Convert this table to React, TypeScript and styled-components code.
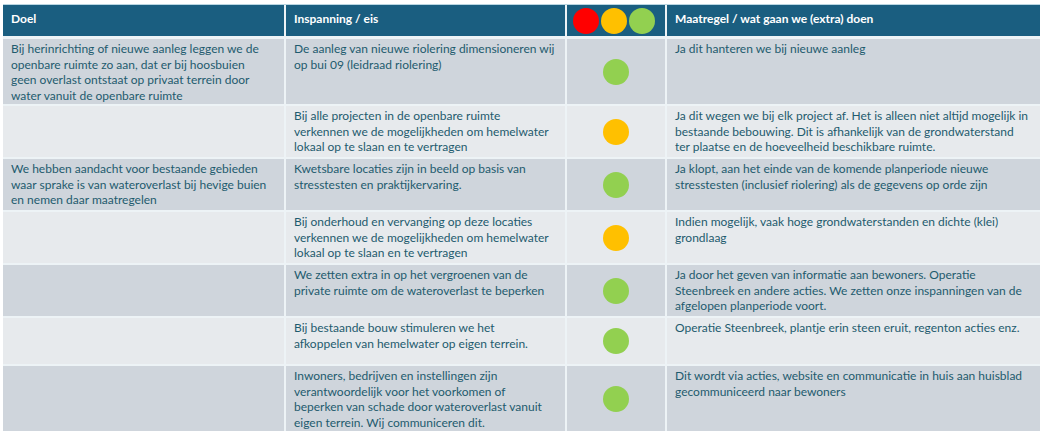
import React from "react";
import styled, { createGlobalStyle } from "styled-components";

type Light = "green" | "orange" | "red";

type Row = {
  doel: string;
  inspanning: string;
  light: Light;
  maatregel: string;
  height: number;
};

const lightColors: Record<Light, string> = {
  red: "#ff0000",
  orange: "#ffc000",
  green: "#92d050",
};

const rows: Row[] = [
  {
    doel: "Bij herinrichting of nieuwe aanleg leggen we de\nopenbare ruimte zo aan, dat er bij hoosbuien\ngeen overlast ontstaat op privaat terrein door\nwater vanuit de openbare ruimte",
    inspanning: "De aanleg van nieuwe riolering dimensioneren wij\nop bui 09 (leidraad riolering)",
    light: "green",
    maatregel: "Ja dit hanteren we bij nieuwe aanleg",
    height: 65,
  },
  {
    doel: "",
    inspanning: "Bij alle projecten in de openbare ruimte\nverkennen we de mogelijkheden om hemelwater\nlokaal op te slaan en te vertragen",
    light: "orange",
    maatregel: "Ja dit wegen we bij elk project af. Het is alleen niet altijd mogelijk in\nbestaande bebouwing. Dit is afhankelijk van de grondwaterstand\nter plaatse en de hoeveelheid beschikbare ruimte.",
    height: 51,
  },
  {
    doel: "We hebben aandacht voor bestaande gebieden\nwaar sprake is van wateroverlast bij hevige buien\nen nemen daar maatregelen",
    inspanning: "Kwetsbare locaties zijn in beeld op basis van\nstresstesten en praktijkervaring.",
    light: "green",
    maatregel: "Ja klopt, aan het einde van de komende planperiode nieuwe\nstresstesten (inclusief riolering) als de gegevens op orde zijn",
    height: 51,
  },
  {
    doel: "",
    inspanning: "Bij onderhoud en vervanging op deze locaties\nverkennen we de mogelijkheden om hemelwater\nlokaal op te slaan en te vertragen",
    light: "orange",
    maatregel: "Indien mogelijk, vaak hoge grondwaterstanden en dichte (klei)\ngrondlaag",
    height: 51,
  },
  {
    doel: "",
    inspanning: "We zetten extra in op het vergroenen van de\nprivate ruimte om de wateroverlast te beperken",
    light: "green",
    maatregel: "Ja door het geven van informatie aan bewoners. Operatie\nSteenbreek en andere acties. We zetten onze inspanningen van de\nafgelopen planperiode voort.",
    height: 51,
  },
  {
    doel: "",
    inspanning: "Bij bestaande bouw stimuleren we het\nafkoppelen van hemelwater op eigen terrein.",
    light: "green",
    maatregel: "Operatie Steenbreek, plantje erin steen eruit, regenton acties enz.",
    height: 46,
  },
  {
    doel: "",
    inspanning: "Inwoners, bedrijven en instellingen zijn\nverantwoordelijk voor het voorkomen of\nbeperken van schade door wateroverlast vanuit\neigen terrein. Wij communiceren dit.",
    light: "green",
    maatregel: "Dit wordt via acties, website en communicatie in huis aan huisblad\ngecommuniceerd naar bewoners",
    height: 65,
  },
];

const GlobalStyle = createGlobalStyle`
  html, body {
    margin: 0;
    padding: 0;
    background: #ffffff;
  }
  body {
    font-family: Lato, "Open Sans", sans-serif;
  }
`;

const App: React.FC = () => {
  return (
    <>
      <GlobalStyle />
      <Page>
        <Table>
          <HeaderRow>
            <HeaderCell>Doel</HeaderCell>
            <HeaderCell>Inspanning / eis</HeaderCell>
            <HeaderLights>
              <Dot color={lightColors.red} />
              <Dot color={lightColors.orange} />
              <Dot color={lightColors.green} />
            </HeaderLights>
            <HeaderCell>Maatregel / wat gaan we (extra) doen</HeaderCell>
          </HeaderRow>
          {rows.map((row, i) => (
            <BodyRow key={i} h={row.height} shade={i % 2 === 0 ? "dark" : "light"}>
              <Cell>{row.doel}</Cell>
              <Cell>{row.inspanning}</Cell>
              <LightCell>
                <Dot color={lightColors[row.light]} />
              </LightCell>
              <Cell>{row.maatregel}</Cell>
            </BodyRow>
          ))}
        </Table>
      </Page>
    </>
  );
};

const Page = styled.div`
  width: 1044px;
  height: 436px;
  padding: 4px 0 0 3px;
  box-sizing: border-box;
`;

const Table = styled.div`
  width: 1037px;
  display: flex;
  flex-direction: column;
  gap: 2px;
  background: #edf3f6;
  border-top: 1px solid #b9d6e2;
`;

const columns = `281px 279px 98px 1fr`;

const HeaderRow = styled.div`
  display: grid;
  grid-template-columns: ${columns};
  column-gap: 2px;
  height: 31px;
  margin-bottom: 1px;
`;

const HeaderCell = styled.div`
  background: #1a5e80;
  color: #ffffff;
  font-weight: 700;
  font-size: 12px;
  padding: 6px 8px 0;
`;

const HeaderLights = styled.div`
  background: #1a5e80;
  display: flex;
  justify-content: center;
  align-items: center;
  gap: 2px;
  padding-right: 5px;
`;

const BodyRow = styled.div<{ h: number; shade: "dark" | "light" }>`
  display: grid;
  grid-template-columns: ${columns};
  column-gap: 2px;
  height: ${(p) => p.h}px;
  & > div {
    background: ${(p) => (p.shade === "dark" ? "#cfd5dc" : "#e7eaed")};
  }
`;

const Cell = styled.div`
  color: #1e5b6e;
  font-size: 12px;
  line-height: 15.5px;
  padding: 2px 8px 0;
  white-space: pre-line;
  overflow: hidden;
`;

const LightCell = styled.div`
  display: flex;
  justify-content: center;
  align-items: center;
`;

const Dot = styled.span<{ color: string }>`
  display: block;
  width: 26px;
  height: 26px;
  border-radius: 50%;
  background: ${(p) => p.color};
`;

export default App;
